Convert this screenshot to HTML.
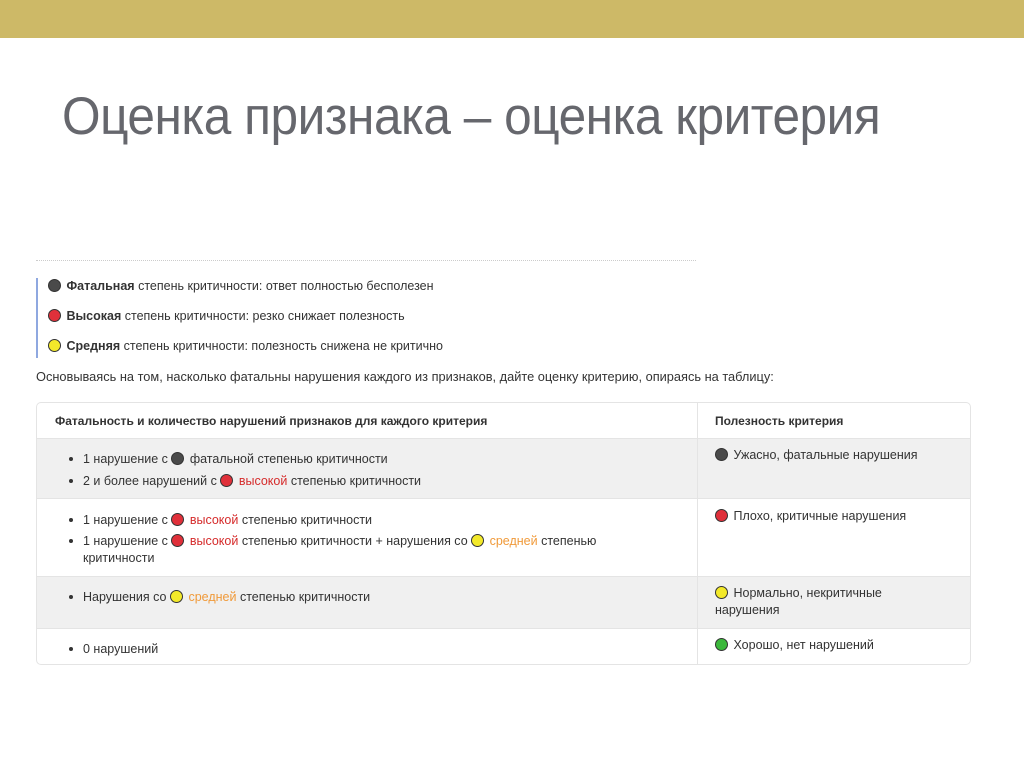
<!DOCTYPE html>
<html><head><meta charset="utf-8"><style>
body{margin:0;width:1024px;height:767px;background:#fff;position:relative;overflow:hidden;font-family:"Liberation Sans",sans-serif;color:#333}
.bar{position:absolute;left:0;top:0;width:1024px;height:38px;background:#cdb967}
.title{position:absolute;left:62px;top:86px;font-size:53px;color:#66676d;transform:scaleX(0.935);transform-origin:left top;white-space:nowrap;letter-spacing:-0.5px}
.a{position:absolute;white-space:nowrap;font-size:12.5px;color:#333}
.d{display:inline-block;width:13px;height:13px;border-radius:50%;border:1px solid #333;vertical-align:-2px;margin:0 2px 0 0;box-sizing:border-box}
.k{background:#4a4a4a}.r{background:#e0303a}.y{background:#f3e92a}.g{background:#3cb83c}
.red{color:#d52b2b}.or{color:#f09a3a}
.tbl{position:absolute;left:36px;top:402px;width:935px;height:263px;border:1px solid #e4e4e4;border-radius:5px;box-sizing:border-box;overflow:hidden}
.row{position:absolute;left:0;width:935px}
.vl{position:absolute;left:660px;top:0;width:1px;height:263px;background:#e4e4e4}
.bul{display:inline-block;width:4px;height:4px;border-radius:50%;background:#333;margin-right:10px;vertical-align:2px}
</style></head><body>
<div class="bar"></div>
<div class="title">Оценка признака – оценка критерия</div>
<div style="position:absolute;left:36px;top:260px;width:660px;height:3px;border-top:1px dotted #ccc"></div>
<div style="position:absolute;left:36px;top:278px;width:2px;height:80px;background:#8fa8e0"></div>
<div class="a" style="left:48px;top:279px"><span class="d k"></span> <b>Фатальная</b> степень критичности: ответ полностью бесполезен</div>
<div class="a" style="left:48px;top:309px"><span class="d r"></span> <b>Высокая</b> степень критичности: резко снижает полезность</div>
<div class="a" style="left:48px;top:339px"><span class="d y"></span> <b>Средняя</b> степень критичности: полезность снижена не критично</div>
<div class="a" style="left:36px;top:369px;font-size:12.8px">Основываясь на том, насколько фатальны нарушения каждого из признаков, дайте оценку критерию, опираясь на таблицу:</div>
<div class="tbl">
<div class="row" style="top:35px;height:60px;background:#f0f0f0;border-top:1px solid #e4e4e4"></div>
<div class="row" style="top:95px;height:78px;border-top:1px solid #e4e4e4"></div>
<div class="row" style="top:173px;height:52px;background:#f0f0f0;border-top:1px solid #e4e4e4"></div>
<div class="row" style="top:225px;height:38px;border-top:1px solid #e4e4e4"></div>
<div class="vl"></div>
<div class="a" style="left:18px;top:11px;font-weight:bold;font-size:12px">Фатальность и количество нарушений признаков для каждого критерия</div>
<div class="a" style="left:678px;top:11px;font-weight:bold;font-size:12px">Полезность критерия</div>
<div class="a" style="left:32px;top:49px"><span class="bul"></span>1 нарушение с <span class="d k"></span> фатальной степенью критичности</div>
<div class="a" style="left:32px;top:71px"><span class="bul"></span>2 и более нарушений с <span class="d r"></span> <span class="red">высокой</span> степенью критичности</div>
<div class="a" style="left:32px;top:110px"><span class="bul"></span>1 нарушение с <span class="d r"></span> <span class="red">высокой</span> степенью критичности</div>
<div class="a" style="left:32px;top:131px"><span class="bul"></span>1 нарушение с <span class="d r"></span> <span class="red">высокой</span> степенью критичности + нарушения со <span class="d y"></span> <span class="or">средней</span> степенью</div>
<div class="a" style="left:46px;top:148px">критичности</div>
<div class="a" style="left:32px;top:187px"><span class="bul"></span>Нарушения со <span class="d y"></span> <span class="or">средней</span> степенью критичности</div>
<div class="a" style="left:32px;top:239px"><span class="bul"></span>0 нарушений</div>
<div class="a" style="left:678px;top:45px"><span class="d k"></span> Ужасно, фатальные нарушения</div>
<div class="a" style="left:678px;top:106px"><span class="d r"></span> Плохо, критичные нарушения</div>
<div class="a" style="left:678px;top:183px"><span class="d y"></span> Нормально, некритичные</div>
<div class="a" style="left:678px;top:200px">нарушения</div>
<div class="a" style="left:678px;top:235px"><span class="d g"></span> Хорошо, нет нарушений</div>
</div>
</body></html>
